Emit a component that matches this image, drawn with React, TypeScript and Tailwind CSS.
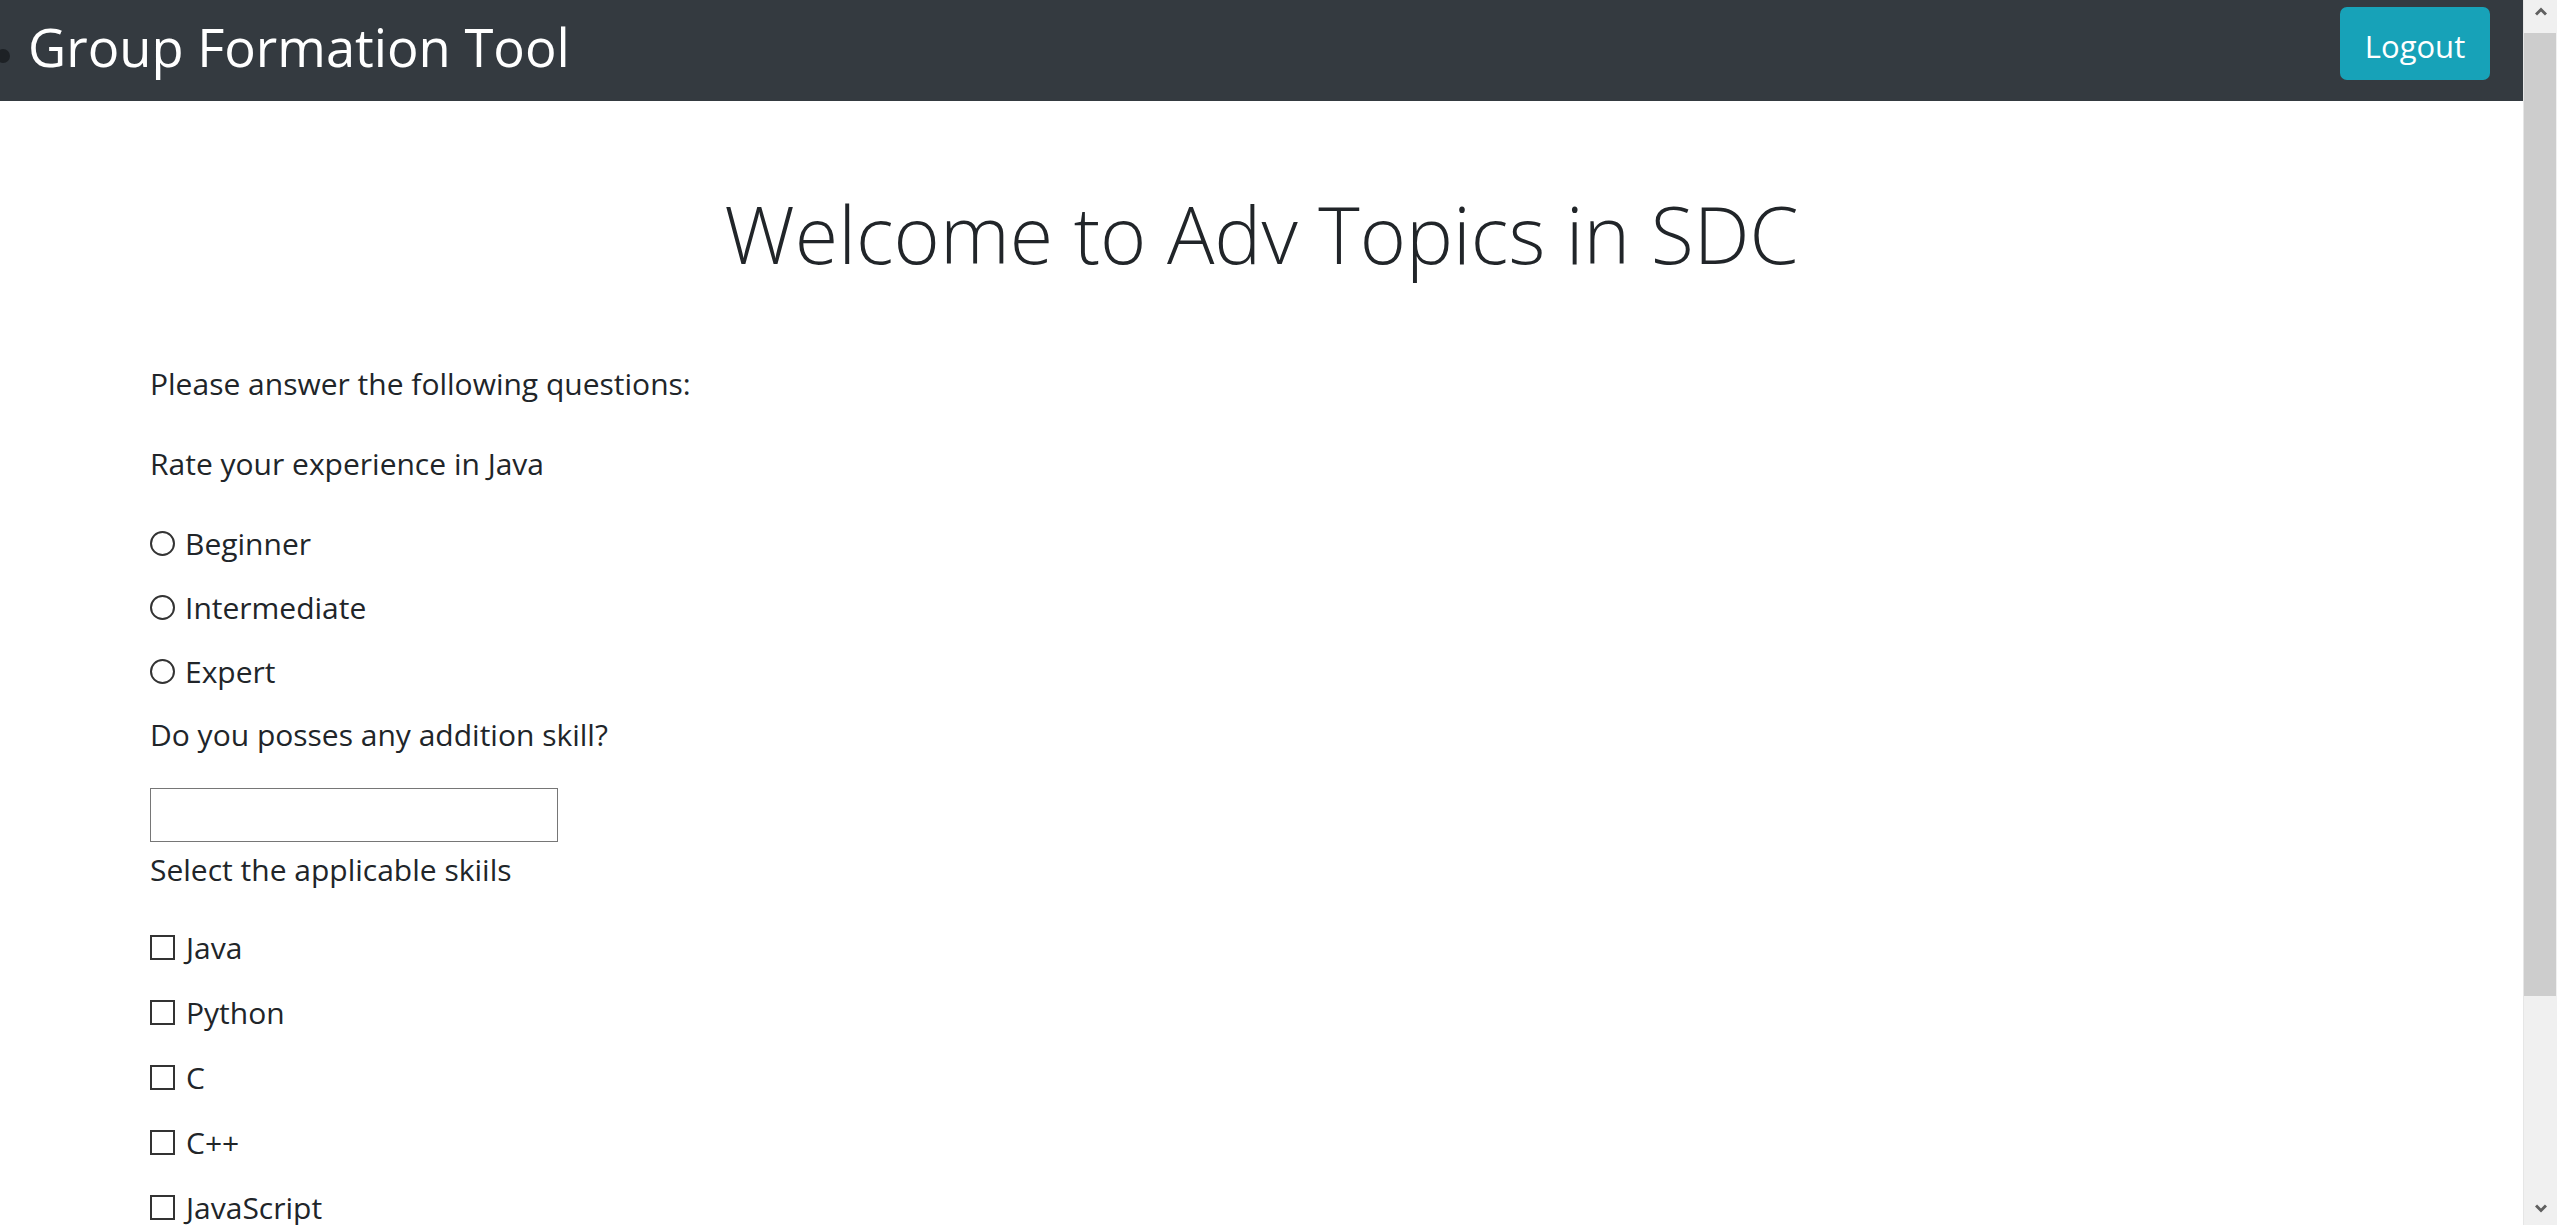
import React from "react";

const radios = ["Beginner", "Intermediate", "Expert"];
const skills = ["Java", "Python", "C", "C++", "JavaScript"];

function Scrollbar() {
  return (
    <div className="flex h-full w-[34px] shrink-0 flex-col border-l border-[#e6e6e6] bg-[#f0f0f0]">
      <div className="flex h-[33px] items-start justify-center pt-[7px]">
        <svg width="12" height="9" viewBox="0 0 12 9">
          <polyline points="1,7.5 6,2.5 11,7.5" fill="none" stroke="#606060" strokeWidth="3" />
        </svg>
      </div>
      <div className="mr-[1px] h-[963px] bg-[#cdcdcd]" />
      <div className="flex flex-1 items-end justify-center pb-[12px]">
        <svg width="12" height="9" viewBox="0 0 12 9">
          <polyline points="1,1.5 6,6.5 11,1.5" fill="none" stroke="#606060" strokeWidth="3" />
        </svg>
      </div>
    </div>
  );
}

export default function App() {
  return (
    <div className="flex h-[1225px] w-full overflow-hidden bg-white font-['Open_Sans',sans-serif] text-[#212529]">
      <div className="min-w-0 flex-1">
        <header className="flex h-[101px] items-start justify-between bg-[#343a40] pr-[33px]">
          <div className="flex items-center">
            <span className="ml-[-4px] mt-[49px] h-[14px] w-[14px] self-start rounded-full bg-[#1d2125]" />
            <h1 className="ml-[18px] mt-[12px] text-[52.5px] leading-[70px] text-white">Group Formation Tool</h1>
          </div>
          <button className="mt-[7px] h-[73px] w-[150px] rounded-[7px] bg-[#17a2b8] pt-[5px] text-[31px] text-white">
            Logout
          </button>
        </header>

        <h2 className="mt-[82px] text-center text-[79px] font-light leading-[101px]">
          Welcome to Adv Topics in SDC
        </h2>

        <main className="mt-[78px] pl-[150px] text-[30px] leading-[43px]">
          <p className="mb-[37px]">Please answer the following questions:</p>
          <p className="mb-[37px]">Rate your experience in Java</p>

          <div className="flex flex-col gap-[21px]">
            {radios.map((r) => (
              <label className="flex items-center" key={r}>
                <span className="h-[25px] w-[25px] rounded-full border-2 border-[#333]" />
                <span className="ml-[10px]">{r}</span>
              </label>
            ))}
          </div>

          <p className="mt-[20px]">Do you posses any addition skill?</p>
          <input
            type="text"
            className="mt-[32px] block h-[54px] w-[408px] border border-[#767676] bg-white outline-none"
          />
          <p className="mt-[6px] mb-[35px]">Select the applicable skiils</p>

          <div className="flex flex-col gap-[22px]">
            {skills.map((s) => (
              <label className="flex items-center" key={s}>
                <span className="h-[25px] w-[25px] border-2 border-[#333]" />
                <span className="ml-[11px]">{s}</span>
              </label>
            ))}
          </div>
        </main>
      </div>
      <Scrollbar />
    </div>
  );
}
